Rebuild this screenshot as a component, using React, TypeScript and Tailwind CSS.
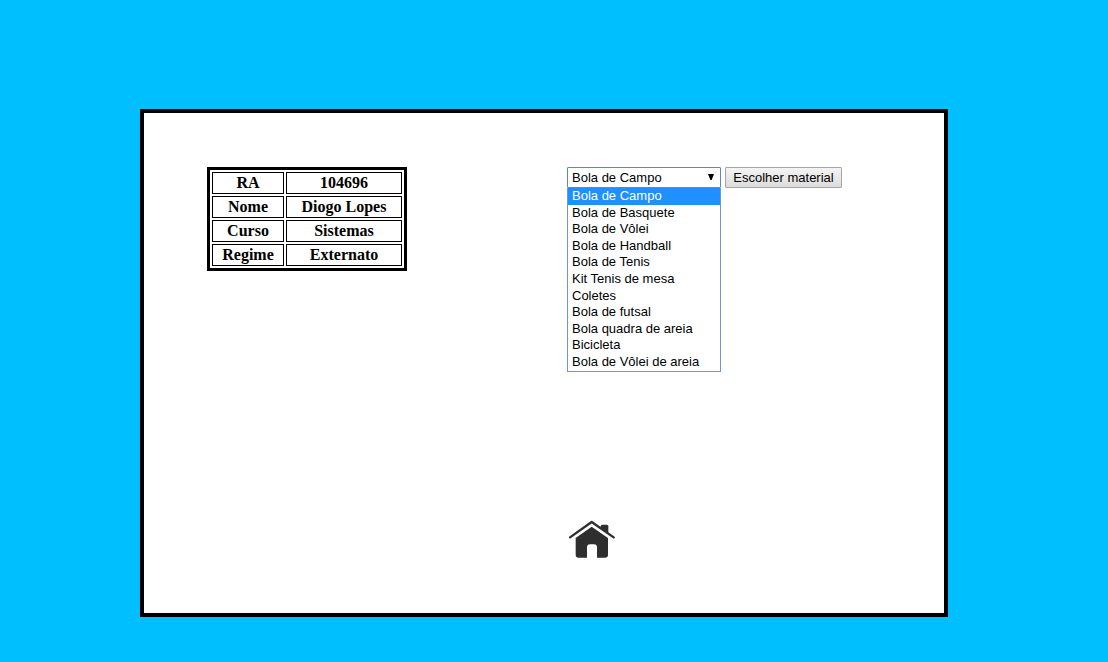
import { useState } from "react";

const student = [
  ["RA", "104696"],
  ["Nome", "Diogo Lopes"],
  ["Curso", "Sistemas"],
  ["Regime", "Externato"],
];

const materials = [
  "Bola de Campo",
  "Bola de Basquete",
  "Bola de Vôlei",
  "Bola de Handball",
  "Bola de Tenis",
  "Kit Tenis de mesa",
  "Coletes",
  "Bola de futsal",
  "Bola quadra de areia",
  "Bicicleta",
  "Bola de Vôlei de areia",
];

function StudentTable() {
  return (
    <table className="w-[200px] table-fixed border-separate border-spacing-[2px] border-[3px] border-black text-center font-['Liberation_Serif',serif] text-base leading-5 font-bold">
      <tbody>
        {student.map(([label, value]) => (
          <tr key={label}>
            <th scope="row" className="w-[72px] border border-black p-0">
              {label}
            </th>
            <td className="border border-black p-0">{value}</td>
          </tr>
        ))}
      </tbody>
    </table>
  );
}

function MaterialPicker() {
  const [selected, setSelected] = useState(materials[0]);

  return (
    <form
      className="flex gap-1 font-['Liberation_Sans',sans-serif] text-[13px]"
      onSubmit={(e) => e.preventDefault()}
    >
      <div className="relative w-[154px]">
        <select
          aria-label="Material"
          value={selected}
          onChange={(e) => setSelected(e.target.value)}
          className="block h-[21px] w-full appearance-none rounded-[1px] border border-[#5b86d0] bg-white pl-1 leading-4 outline-none"
        >
          {materials.map((m) => (
            <option key={m}>{m}</option>
          ))}
        </select>
        <svg
          viewBox="0 0 6 6"
          className="pointer-events-none absolute top-[7px] right-[7px] size-[6px]"
          aria-hidden="true"
        >
          <path d="M0 0h6L3.6 6H2.4z" />
        </svg>
        <ul
          role="listbox"
          aria-label="Materiais"
          className="absolute top-[21px] left-0 grid h-[184px] w-full auto-rows-fr border border-t-0 border-[#6f96d8] bg-white pb-px leading-4"
        >
          {materials.map((m) => (
            <li
              key={m}
              role="option"
              aria-selected={m === selected}
              onClick={() => setSelected(m)}
              className="flex cursor-default items-center pl-1 whitespace-nowrap aria-selected:bg-[#1e90ff] aria-selected:text-white"
            >
              {m}
            </li>
          ))}
        </ul>
      </div>
      <button
        type="submit"
        className="h-[21px] w-[117px] rounded-[1px] border border-[#a6a6a6] bg-linear-to-b from-[#f4f4f4] to-[#dcdcdc] leading-4 whitespace-nowrap"
      >
        Escolher material
      </button>
    </form>
  );
}

function HomeIcon() {
  return (
    <svg viewBox="27 30 138 114" className="h-[38px] w-[46px]" aria-hidden="true">
      <path
        d="M30 82 95 36l66 46"
        fill="none"
        stroke="#2e2e2e"
        strokeWidth="7"
        strokeLinecap="round"
        strokeLinejoin="round"
      />
      <path
        d="M122 49q0-5 5-5h13q5 0 5 5v20l-23-16z"
        fill="#2e2e2e"
      />
      <path
        d="M47 84 95 50l49 34v50q0 9-9 9h-24v-31q0-9-9-9H90q-9 0-9 9v31H56q-9 0-9-9z"
        fill="#2e2e2e"
      />
    </svg>
  );
}

export default function App() {
  return (
    <div className="min-h-screen bg-[#00bfff] pt-[109px] pr-5 pb-[45px] text-black">
      <main className="mx-auto grid min-h-[508px] max-w-[808px] grid-cols-2 border-4 border-black bg-white pt-[54px]">
        <section className="pl-[63px]">
          <StudentTable />
        </section>
        <section className="flex flex-col items-start pl-[23px]">
          <MaterialPicker />
          <a href="#inicio" aria-label="Início" className="mt-[332px] ml-[2px]">
            <HomeIcon />
          </a>
        </section>
      </main>
    </div>
  );
}
